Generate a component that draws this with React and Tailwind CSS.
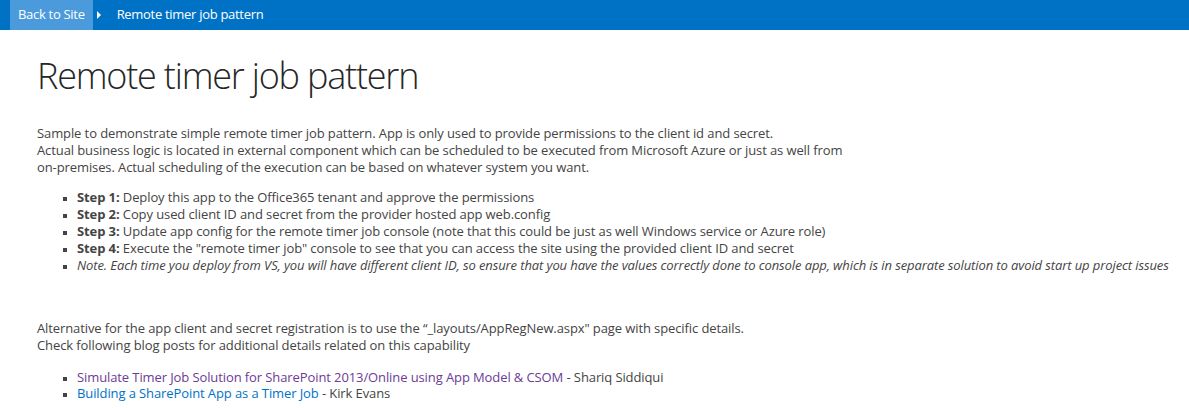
export default function App() {
  const font = { fontFamily: "'Open Sans', 'Noto Sans', sans-serif" }
  return (
    <div className="min-h-[408px] bg-white text-[#444444]" style={font}>
      <div className="h-[30px] bg-[#0072c6] flex items-stretch text-white text-[13px] tracking-[-0.3px]">
        <div className="ml-[10px] px-[8px] bg-[#4b9bdc] flex items-center">Back to Site</div>
        <div className="w-[12px] flex items-center justify-center">
          <span className="block w-0 h-0 border-y-[4px] border-y-transparent border-l-[4px] border-l-white" />
        </div>
        <div className="pl-[12px] flex items-center">Remote timer job pattern</div>
      </div>
      <div className="pl-[37px] pr-[20px]">
        <h1 className="mt-[23px] text-[36px] leading-[46px] font-light text-[#262626] tracking-[-1.2px]">Remote timer job pattern</h1>
        <p className="mt-[26px] text-[13px] leading-[17px] tracking-[-0.1px]">
          Sample to demonstrate simple remote timer job pattern. App is only used to provide permissions to the client id and secret.<br />
          Actual business logic is located in external component which can be scheduled to be executed from Microsoft Azure or just as well from<br />
          on-premises. Actual scheduling of the execution can be based on whatever system you want.
        </p>
        <ul className="mt-[13px] pl-[40px] text-[13px] leading-[17px] tracking-[-0.1px] list-[square] marker:text-[#444] marker:text-[10px]">
          <li><b>Step 1:</b> Deploy this app to the Office365 tenant and approve the permissions</li>
          <li><b>Step 2:</b> Copy used client ID and secret from the provider hosted app web.config</li>
          <li><b>Step 3:</b> Update app config for the remote timer job console (note that this could be just as well Windows service or Azure role)</li>
          <li><b>Step 4:</b> Execute the "remote timer job" console to see that you can access the site using the provided client ID and secret</li>
          <li className="italic">Note. Each time you deploy from VS, you will have different client ID, so ensure that you have the values correctly done to console app, which is in separate solution to avoid start up project issues</li>
        </ul>
        <p className="mt-[46px] text-[13px] leading-[17px] tracking-[-0.1px]">
          Alternative for the app client and secret registration is to use the “_layouts/AppRegNew.aspx" page with specific details.<br />
          Check following blog posts for additional details related on this capability
        </p>
        <ul className="mt-[15px] pl-[40px] text-[13px] leading-[16px] tracking-[-0.1px] list-[square] marker:text-[#444] marker:text-[10px]">
          <li><a className="text-[#6d3a96]">Simulate Timer Job Solution for SharePoint 2013/Online using App Model &amp; CSOM</a> - Shariq Siddiqui</li>
          <li><a className="text-[#0072c6]">Building a SharePoint App as a Timer Job</a> - Kirk Evans</li>
        </ul>
      </div>
    </div>
  )
}
